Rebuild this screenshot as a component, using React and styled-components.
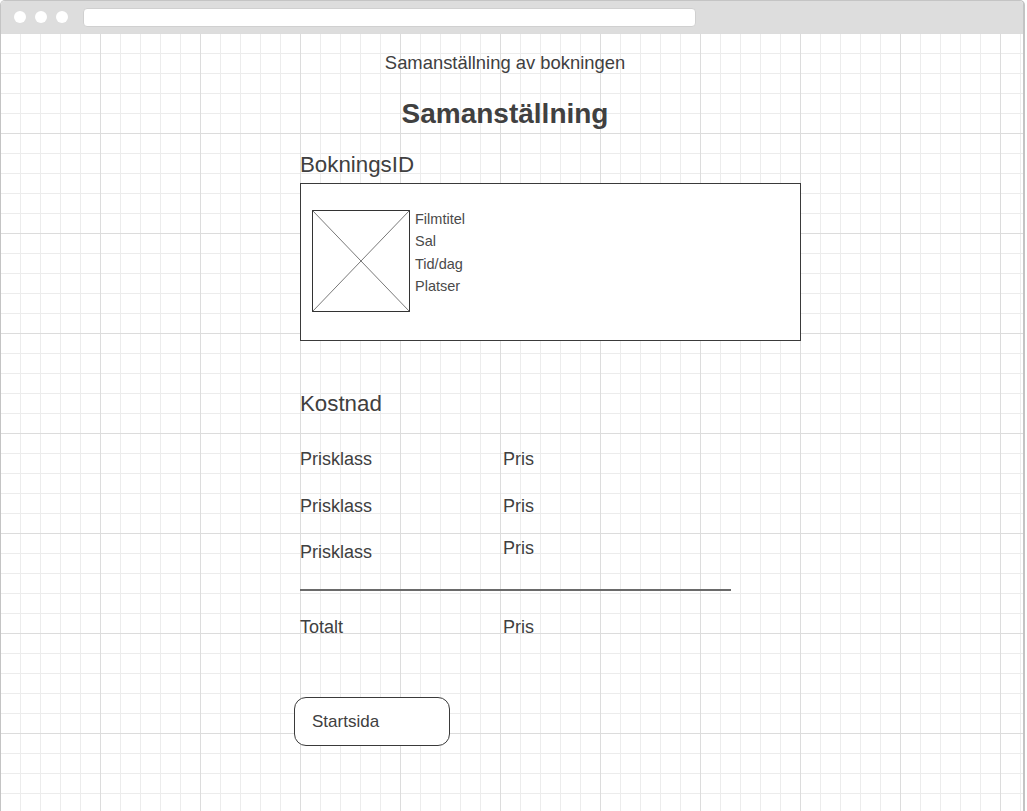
import React from 'react';
import styled, { createGlobalStyle } from 'styled-components';

const GlobalStyle = createGlobalStyle`
  html, body {
    margin: 0;
    padding: 0;
    background: #fff;
    font-family: "Liberation Sans", Arial, sans-serif;
    color: #404040;
  }
`;

const Window = styled.div`
  width: 1025px;
  height: 811px;
  box-sizing: border-box;
  border: 1px solid #c4c4c4;
  border-right-width: 2px;
  border-bottom: none;
  border-radius: 5px 5px 0 0;
  overflow: hidden;
  display: flex;
  flex-direction: column;
`;

const ChromeBar = styled.div`
  height: 32px;
  flex: none;
  background: #dddddd;
  display: flex;
  align-items: center;
  padding-left: 13px;
  gap: 9px;
`;

const Dot = styled.span`
  width: 12px;
  height: 12px;
  border-radius: 50%;
  background: #fff;
`;

const AddressBar = styled.div`
  margin-left: 6px;
  width: 613px;
  height: 19px;
  background: #fff;
  border-radius: 4px;
  border: 1px solid #d0d0d0;
  box-sizing: border-box;
`;

const Canvas = styled.div`
  flex: 1;
  background-color: #fff;
  background-image:
    linear-gradient(to right, #dcdcdc 1px, transparent 1px),
    linear-gradient(to bottom, #dcdcdc 1px, transparent 1px),
    linear-gradient(to right, #ececec 1px, transparent 1px),
    linear-gradient(to bottom, #ececec 1px, transparent 1px);
  background-size: 100px 100px, 100px 100px, 20px 20px, 20px 20px;
  background-position: -1px 0, -1px 0, -1px 0, -1px 0;
  padding-top: 19px;
`;

const Heading = styled.div`
  width: 1008px;
  text-align: center;
  font-size: ${p => p.$size}px;
  font-weight: ${p => (p.$bold ? 700 : 400)};
  line-height: ${p => Math.round(p.$size) + 3}px;
  margin-top: ${p => p.$top || 0}px;
`;

const Column = styled.div`
  margin-left: 299px;
  width: 501px;
`;

const SectionTitle = styled.div`
  font-size: 22.3px;
  line-height: 25px;
  margin-top: ${p => p.$top}px;
`;

const BookingBox = styled.div`
  margin-top: 6px;
  height: 158px;
  box-sizing: border-box;
  border: 1px solid #3a3a3a;
  background: #fff;
  padding: 26px 11px;
  display: flex;
  align-items: flex-start;
  gap: 5px;
`;

const Placeholder = styled.svg`
  width: 98px;
  height: 102px;
  flex: none;
`;

const InfoList = styled.div`
  margin-top: -2px;
  display: flex;
  flex-direction: column;
  font-size: 14.5px;
  line-height: 22.3px;
  color: #4a4a4a;
`;

const CostRow = styled.div`
  display: grid;
  grid-template-columns: 203px 1fr;
  font-size: 18px;
  line-height: 22px;
  margin-top: ${p => p.$top}px;
`;

const PriceCell = styled.span`
  position: relative;
  top: ${p => p.$shift || 0}px;
`;

const Divider = styled.div`
  margin-top: 26px;
  width: 431px;
  height: 2px;
  background: #6a6a6a;
`;

const HomeButton = styled.button`
  margin-top: 59px;
  margin-left: -6px;
  width: 156px;
  height: 49px;
  box-sizing: border-box;
  border: 1px solid #3a3a3a;
  border-radius: 12px;
  background: #fff;
  font-family: "Liberation Sans", Arial, sans-serif;
  font-size: 17px;
  color: #404040;
  text-align: left;
  padding: 0 0 0 17px;
`;

const rows = [
  { label: 'Prisklass', top: 32 },
  { label: 'Prisklass', top: 25 },
  { label: 'Prisklass', top: 24, shift: -4 },
];

export default function App() {
  return (
    <>
      <GlobalStyle />
      <Window>
        <ChromeBar>
          <Dot />
          <Dot />
          <Dot />
          <AddressBar />
        </ChromeBar>
        <Canvas>
          <Heading $size={18.4}>Samanställning av bokningen</Heading>
          <Heading $size={28} $bold $top={25}>Samanställning</Heading>
          <Column>
            <SectionTitle $top={23}>BokningsID</SectionTitle>
            <BookingBox>
              <Placeholder viewBox="0 0 98 102">
                <rect x="0.5" y="0.5" width="97" height="101" fill="#fff" stroke="#333" />
                <line x1="0.5" y1="0.5" x2="97.5" y2="101.5" stroke="#555" strokeWidth="0.8" />
                <line x1="97.5" y1="0.5" x2="0.5" y2="101.5" stroke="#555" strokeWidth="0.8" />
              </Placeholder>
              <InfoList>
                <span>Filmtitel</span>
                <span>Sal</span>
                <span>Tid/dag</span>
                <span>Platser</span>
              </InfoList>
            </BookingBox>
            <SectionTitle $top={50}>Kostnad</SectionTitle>
            {rows.map((r, i) => (
              <CostRow key={i} $top={r.top}>
                <span>{r.label}</span>
                <PriceCell $shift={r.shift}>Pris</PriceCell>
              </CostRow>
            ))}
            <Divider />
            <CostRow $top={25}>
              <span>Totalt</span>
              <span>Pris</span>
            </CostRow>
            <HomeButton>Startsida</HomeButton>
          </Column>
        </Canvas>
      </Window>
    </>
  );
}
